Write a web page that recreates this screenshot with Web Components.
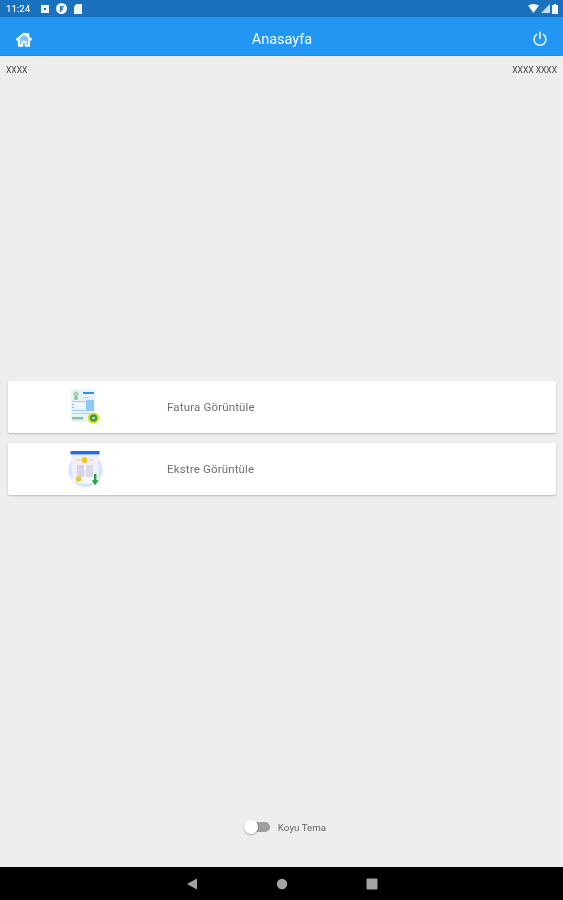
<!DOCTYPE html>
<html lang="tr">
<head>
<meta charset="utf-8">
<title>Anasayfa</title>
<style>
  html, body { margin: 0; height: 100%; }
  body { font-family: Roboto, "Liberation Sans", sans-serif; background: #eeeeee; }
  app-shell { height: 900px; filter: blur(.6px); }
</style>
</head>
<body>
<template id="invoice-icon">
  <svg width="32" height="38" viewBox="0 0 32 38">
    <rect x="1" y="1" width="24" height="33" fill="#e6f2fc"/>
    <circle cx="6" cy="6" r="2.6" fill="#a9d3a6"/>
    <circle cx="6" cy="10" r="2" fill="#8fc48c"/>
    <rect x="13" y="4" width="11" height="2" fill="#2f93ee"/>
    <rect x="13" y="9" width="6" height="1" fill="#bcdcf7"/>
    <rect x="2" y="13" width="14" height="1" fill="#9dcdf4"/>
    <rect x="2" y="16" width="2" height="1" fill="#7fbdf0"/>
    <rect x="5" y="16" width="10" height="1" fill="#ffffff"/>
    <rect x="2" y="19" width="2" height="1" fill="#7fbdf0"/>
    <rect x="5" y="19" width="10" height="1" fill="#ffffff"/>
    <rect x="2" y="22" width="14" height="1" fill="#9dcdf4"/>
    <rect x="16" y="12" width="8" height="11" fill="#92c8f5"/>
    <rect x="2" y="25" width="20" height="1" fill="#aed6f6"/>
    <rect x="2" y="29" width="11" height="2.4" fill="#84c788"/>
    <circle cx="23.5" cy="30" r="5.6" fill="#e5dc12"/>
    <circle cx="23.5" cy="30" r="3.7" fill="#3f9e4a"/>
    <rect x="22" y="29.3" width="3" height="1.4" fill="#dff0d8"/>
  </svg>
</template>
<template id="statement-icon">
  <svg width="36" height="38" viewBox="0 0 36 38">
    <circle cx="17.5" cy="20" r="17" fill="#cfe6fb"/>
    <rect x="3.5" y="3" width="27" height="27" fill="#f1effa"/>
    <path d="M3.5 30 L26 25 L30 31 Q20 35 10 33 Z" fill="#f7f8fd"/>
    <rect x="2.5" y="1" width="29" height="3.4" fill="#1f6cf0"/>
    <circle cx="16.5" cy="10" r="3" fill="#f5c518"/>
    <rect x="8" y="9.3" width="4" height="1.4" fill="#e6d9a0"/>
    <rect x="21" y="9.3" width="4" height="1.4" fill="#e6d9a0"/>
    <rect x="9" y="15" width="7" height="12" fill="#d7d3e8"/>
    <rect x="18" y="15" width="7" height="12" fill="#dcd9ec"/>
    <circle cx="10.5" cy="29" r="2.8" fill="#eac92a"/>
    <path d="M26 24 h2.4 v6.2 h2.4 l-3.6 5 l-3.6 -5 h2.4 Z" fill="#2fa33b"/>
  </svg>
</template>
<app-shell>
  <status-bar slot="status"></status-bar>
  <app-bar slot="bar" heading="Anasayfa"></app-bar>
  <info-row slot="info" left="XXXX" right="XXXX XXXX"></info-row>
  <menu-card slot="menu" icon="invoice-icon">Fatura Görüntüle</menu-card>
  <menu-card slot="menu" icon="statement-icon">Ekstre Görüntüle</menu-card>
  <theme-toggle slot="foot">Koyu Tema</theme-toggle>
  <nav-bar slot="nav"></nav-bar>
</app-shell>
<script>
  class AppShell extends HTMLElement {
    constructor() {
      super();
      this.attachShadow({ mode: 'open' });
      this.shadowRoot.innerHTML = `
        <style>
          :host { display: flex; flex-direction: column; width: 563px; background: #eeeeee; overflow: hidden; }
          main { flex: 1; display: flex; flex-direction: column; min-height: 0; }
          .menu { display: flex; flex-direction: column; gap: 10px; padding: 0 7px 0 8px; margin-top: 305px; }
          .foot { margin-top: auto; padding-bottom: 20px; }
        </style>
        <slot name="status"></slot>
        <slot name="bar"></slot>
        <main>
          <slot name="info"></slot>
          <div class="menu"><slot name="menu"></slot></div>
          <div class="foot"><slot name="foot"></slot></div>
        </main>
        <slot name="nav"></slot>
      `;
    }
  }

  class StatusBar extends HTMLElement {
    constructor() {
      super();
      this.attachShadow({ mode: 'open' });
      this.shadowRoot.innerHTML = `
        <style>
          :host { display: flex; align-items: center; height: 17px; padding: 0 5px 0 6px; background: #1a71bd; color: #e8f2fb; font: 500 9.5px Roboto, sans-serif; }
          .left { display: flex; align-items: center; gap: 7px; }
          .right { display: flex; align-items: center; gap: 2px; margin-left: auto; }
          svg { display: block; fill: #f2f7fc; }
          span { margin-right: 4px; }
        </style>
        <div class="left">
          <span>11:24</span>
          <svg width="8" height="8" viewBox="0 0 8 8"><path fill-rule="evenodd" d="M0 0h8v8H0Z M3 3v2h2V3Z"/></svg>
          <svg width="11" height="11" viewBox="0 0 11 11"><path fill-rule="evenodd" d="M5.5 0a5.5 5.5 0 1 0 0 11a5.5 5.5 0 1 0 0-11Z M4 3h3.6v1.6H5.4v1H7v1.5H5.4V9H4Z"/></svg>
          <svg width="8" height="10" viewBox="0 0 8 10"><path d="M2.5 0H8v10H0V2.5Z"/></svg>
        </div>
        <div class="right">
          <svg width="11" height="9" viewBox="0 0 11 9"><path d="M0 1.5Q5.5-1.5 11 1.5L5.5 9Z"/></svg>
          <svg width="9" height="9" viewBox="0 0 9 9"><path d="M9 0V9H0Z" fill-opacity=".8"/></svg>
          <svg width="6" height="10" viewBox="0 0 6 10"><path d="M2 0h2v1h2v9H0V1h2Z"/></svg>
        </div>
      `;
    }
  }

  class AppBar extends HTMLElement {
    constructor() {
      super();
      this.attachShadow({ mode: 'open' });
    }
    connectedCallback() {
      this.shadowRoot.innerHTML = `
        <style>
          :host { display: flex; align-items: center; justify-content: space-between; box-sizing: border-box; height: 39px; padding: 6px 15px 0 16px; background: #2196f3; color: #fff; border-bottom: 1px solid #1b8cf0; }
          h1 { margin: 0; font: 400 14.5px Roboto, sans-serif; color: #f4faff; }
          svg { display: block; }
        </style>
        <svg width="16" height="15" viewBox="0 0 18 16">
          <path d="M9 1.2L1 8h2.2v7h4v-4.4h3.6V15h4V8H17L13.8 5.3V1.8h-2v1.8Z" fill="#7cc2f8" stroke="#fff" stroke-width="2.2" stroke-linejoin="round"/>
        </svg>
        <h1>${this.getAttribute('heading')}</h1>
        <svg width="16" height="16" viewBox="0 0 17 17" fill="none" stroke="#e9f4fe" stroke-width="1.7" stroke-linecap="round">
          <path d="M8.5 1.5V8"/>
          <path d="M5 3.6A6.3 6.3 0 1 0 12 3.6"/>
        </svg>
      `;
    }
  }

  class InfoRow extends HTMLElement {
    constructor() {
      super();
      this.attachShadow({ mode: 'open' });
    }
    connectedCallback() {
      this.shadowRoot.innerHTML = `
        <style>
          :host { display: flex; justify-content: space-between; height: 20px; padding: 8px 6px 0 6px; box-sizing: border-box; font: 400 8.5px/12px Roboto, sans-serif; color: #444; }
        </style>
        <span>${this.getAttribute('left')}</span>
        <span>${this.getAttribute('right')}</span>
      `;
    }
  }

  class MenuCard extends HTMLElement {
    constructor() {
      super();
      this.attachShadow({ mode: 'open' });
    }
    connectedCallback() {
      const icon = document.getElementById(this.getAttribute('icon'));
      this.shadowRoot.innerHTML = `
        <style>
          :host { display: grid; grid-template-columns: 159px 1fr; align-items: center; height: 52px; background: #fff; border-radius: 2px; box-shadow: 0 1px 2px rgba(0,0,0,.22); }
          .icon { display: flex; justify-content: center; padding-right: 4px; }
          .label { font: 400 11.5px Roboto, sans-serif; color: #6f6f6f; letter-spacing: .16px; }
        </style>
        <div class="icon"></div>
        <div class="label"><slot></slot></div>
      `;
      this.shadowRoot.querySelector('.icon').appendChild(icon.content.cloneNode(true));
    }
  }

  class ThemeToggle extends HTMLElement {
    constructor() {
      super();
      this.attachShadow({ mode: 'open' });
      this.shadowRoot.innerHTML = `
        <style>
          :host { display: flex; align-items: center; justify-content: center; gap: 8px; height: 40px; padding-left: 7px; font: 400 9.8px Roboto, sans-serif; color: #666; }
          .switch { position: relative; width: 26px; height: 10px; }
          .track { display: block; width: 20px; height: 10px; margin-left: 6px; border-radius: 5px; background: #9e9e9e; }
          .thumb { position: absolute; left: 0; top: -2px; width: 14px; height: 14px; border-radius: 50%; background: #fff; box-shadow: 0 1px 2px rgba(0,0,0,.3); }
        </style>
        <div class="switch"><span class="track"></span><span class="thumb"></span></div>
        <div><slot></slot></div>
      `;
    }
  }

  class NavBar extends HTMLElement {
    constructor() {
      super();
      this.attachShadow({ mode: 'open' });
      this.shadowRoot.innerHTML = `
        <style>
          :host { display: flex; align-items: center; justify-content: center; gap: 78px; height: 33px; background: #000; }
          svg { display: block; fill: #a3a3a3; }
        </style>
        <svg width="12" height="12" viewBox="0 0 12 12"><path d="M11 .5V11.5L1 6Z"/></svg>
        <svg width="12" height="12" viewBox="0 0 12 12"><circle cx="6" cy="6" r="5.2"/></svg>
        <svg width="12" height="12" viewBox="0 0 12 12"><rect x=".5" y=".5" width="11" height="11" rx="1"/></svg>
      `;
    }
  }

  customElements.define('app-shell', AppShell);
  customElements.define('status-bar', StatusBar);
  customElements.define('app-bar', AppBar);
  customElements.define('info-row', InfoRow);
  customElements.define('menu-card', MenuCard);
  customElements.define('theme-toggle', ThemeToggle);
  customElements.define('nav-bar', NavBar);
</script>
</body>
</html>
